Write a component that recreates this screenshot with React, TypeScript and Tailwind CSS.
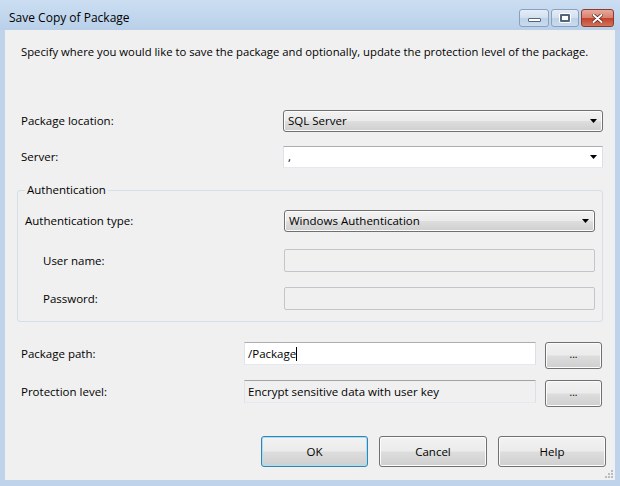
import React from "react";

const font = { fontFamily: '"Open Sans", "Noto Sans", sans-serif' };

function Arrow() {
  return (
    <svg width="7" height="4" viewBox="0 0 7 4" className="shrink-0">
      <path d="M0 0h7L3.5 4z" fill="#000" />
    </svg>
  );
}

function ButtonCombo({ value }: { value: string }) {
  return (
    <div className="flex-1 h-[22px] flex items-center justify-between pl-[4px] pr-[5px] rounded-[3px] border border-[#707070] bg-[linear-gradient(to_bottom,#f2f2f2_0%,#ebebeb_48%,#dddddd_52%,#cfcfcf_100%)] shadow-[inset_0_0_0_1px_#fcfcfc]">
      <span>{value}</span>
      <Arrow />
    </div>
  );
}

function PushButton({ children, primary, className }: { children: React.ReactNode; primary?: boolean; className?: string }) {
  return (
    <div
      className={
        "flex items-center justify-center rounded-[3px] border bg-[linear-gradient(to_bottom,#f2f2f2_0%,#ebebeb_48%,#dddddd_52%,#cfcfcf_100%)] " +
        (primary
          ? "border-[#3c7fb1] shadow-[inset_0_0_0_1px_#9fe3f9]"
          : "border-[#707070] shadow-[inset_0_0_0_1px_#fcfcfc]") +
        " " +
        (className ?? "")
      }
    >
      {children}
    </div>
  );
}

export default function App() {
  return (
    <div className="w-[620px] h-[486px] bg-[#bfd4eb] flex flex-col overflow-hidden text-[11.5px] text-black" style={font}>
      {/* title bar */}
      <div className="h-[30px] flex items-start justify-between bg-[linear-gradient(to_bottom,#cbdef2,#b9d0e9)]">
        <div className="pl-[9px] pt-[9px] leading-[18px] text-[12px]">Save Copy of Package</div>
        <div className="flex gap-[2px] pt-[9px] pr-[6px]">
          <div className="w-[30px] h-[18px] rounded-[3px] border border-[#8aa0bd] bg-[linear-gradient(to_bottom,#e4edf7_0%,#d2e0ef_48%,#bfd1e6_52%,#c9dbee_100%)] flex items-center justify-center">
            <div className="w-[13px] h-[4px] mt-[3px] rounded-[1px] bg-white border border-[#53657d]" />
          </div>
          <div className="w-[28px] h-[18px] rounded-[3px] border border-[#8aa0bd] bg-[linear-gradient(to_bottom,#e4edf7_0%,#d2e0ef_48%,#bfd1e6_52%,#c9dbee_100%)] flex items-center justify-center">
            <div className="w-[10px] h-[8px] border-[2px] border-[#53657d] bg-white rounded-[1px] shadow-[0_0_0_1px_#fff]" />
          </div>
          <div className="w-[33px] h-[18px] rounded-[3px] border border-[#8b3a2e] bg-[linear-gradient(to_bottom,#e8a89b_0%,#d9816f_48%,#c4432c_52%,#d3725a_100%)] flex items-center justify-center">
            <svg width="11" height="9" viewBox="0 0 11 9">
              <path d="M1.5 1l8 7M9.5 1l-8 7" stroke="#5a1e14" strokeWidth="3.4" strokeLinecap="round" />
              <path d="M1.5 1l8 7M9.5 1l-8 7" stroke="#fff" strokeWidth="2" strokeLinecap="round" />
            </svg>
          </div>
        </div>
      </div>

      {/* client area */}
      <div className="relative mx-[5px] h-[450px] bg-[#f0f0f0] flex flex-col pl-[12px] pr-[12px]">
        <div className="pt-[14px] pl-[4px] leading-[16px] text-[11.3px] whitespace-nowrap">
          Specify where you would like to save the package and optionally, update the protection level of the package.
        </div>

        <div className="mt-[50px] flex items-center h-[22px] pl-[4px]">
          <div className="w-[262px]">Package location:</div>
          <ButtonCombo value="SQL Server" />
        </div>

        <div className="mt-[14px] flex items-center h-[22px] pl-[4px]">
          <div className="w-[262px]">Server:</div>
          <div className="flex-1 h-[22px] flex items-center justify-between pl-[4px] pr-[5px] bg-white border border-[#e3e9ef] border-t-[#abadb3] border-l-[#e2e3ea] border-r-[#dbdfe6]">
            <span>,</span>
            <Arrow />
          </div>
        </div>

        <fieldset className="mt-[14px] border border-[#d5dfe5] rounded-[3px] pl-[7px] pr-[7px] pt-[12px] pb-[11px]">
          <legend className="px-[2px] leading-[16px]">Authentication</legend>
          <div className="flex items-center h-[22px]">
            <div className="w-[259px]">Authentication type:</div>
            <ButtonCombo value="Windows Authentication" />
          </div>
          <div className="mt-[17px] flex items-center h-[23px]">
            <div className="w-[259px] pl-[18px]">User name:</div>
            <div className="flex-1 h-[23px] rounded-[2px] border border-[#c2c6ca] bg-[#f0f0f0]" />
          </div>
          <div className="mt-[15px] flex items-center h-[23px]">
            <div className="w-[259px] pl-[18px]">Password:</div>
            <div className="flex-1 h-[23px] rounded-[2px] border border-[#c2c6ca] bg-[#f0f0f0]" />
          </div>
        </fieldset>

        <div className="mt-[20px] flex items-start pl-[4px] pr-[1px]">
          <div className="w-[223px] h-[23px] flex items-center">Package path:</div>
          <div className="w-[292px] h-[23px] flex items-center pl-[3px] bg-white border border-[#e3e9ef] border-t-[#abadb3] border-l-[#e2e3ea] border-r-[#dbdfe6]">
            <span>/Package</span>
            <span className="w-px h-[14px] bg-black" />
          </div>
          <PushButton className="ml-[9px] flex-1 h-[27px] text-[10px] pb-[3px]">...</PushButton>
        </div>

        <div className="mt-[11px] flex items-start pl-[4px] pr-[1px]">
          <div className="w-[223px] h-[23px] flex items-center">Protection level:</div>
          <div className="w-[292px] h-[23px] flex items-center pl-[3px] bg-[#f0f0f0] border border-[#e3e9ef] border-t-[#a0a4a8] border-l-[#e2e3ea] border-r-[#dbdfe6]">
            Encrypt sensitive data with user key
          </div>
          <PushButton className="ml-[9px] flex-1 h-[27px] text-[10px] pb-[3px]">...</PushButton>
        </div>

        <div className="mt-[29px] flex justify-end gap-[11px] -mr-[3px]">
          <PushButton primary className="w-[107px] h-[31px]">OK</PushButton>
          <PushButton className="w-[108px] h-[31px]">Cancel</PushButton>
          <PushButton className="w-[108px] h-[31px]">Help</PushButton>
        </div>

        {/* size grip */}
        <div className="absolute right-[2px] bottom-[2px] grid grid-cols-3 gap-[1px]">
          {[0, 0, 1, 0, 1, 1, 1, 1, 1].map((v, i) => (
            <div key={i} className={"w-[2px] h-[2px] " + (v ? "bg-[#b8bcc2]" : "")} />
          ))}
        </div>
      </div>
    </div>
  );
}
